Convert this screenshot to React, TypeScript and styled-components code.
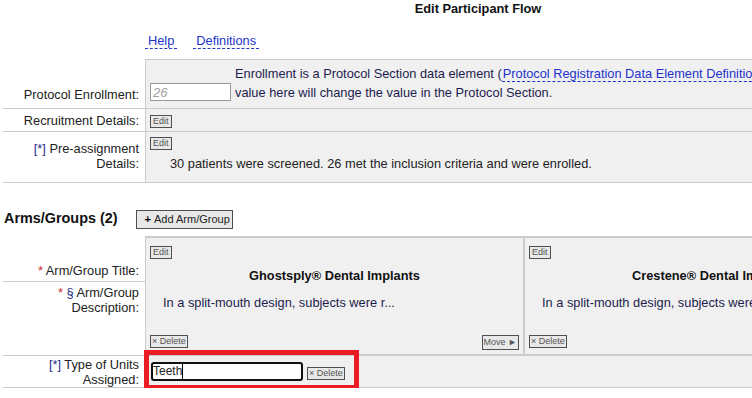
import styled, { createGlobalStyle } from "styled-components";

const GlobalStyle = createGlobalStyle`
  html, body {
    margin: 0;
    padding: 0;
    overflow: hidden;
    background: #ffffff;
  }
  body {
    font-family: "Liberation Sans", Arial, sans-serif;
    font-size: 12.8px;
    color: #222;
  }
`;

const Page = styled.div`
  width: 1000px;
  padding-left: 3px;
`;

const Title = styled.h1`
  width: 950px;
  margin: 0;
  padding-top: 1px;
  text-align: center;
  font-size: 12.8px;
  line-height: 15px;
  font-weight: bold;
  color: #111;
`;

const LinkBar = styled.div`
  display: flex;
  gap: 16px;
  padding: 17px 0 10px 142px;
`;

const DashLink = styled.a`
  display: inline-block;
  padding: 0 3px;
  line-height: 15px;
  color: #2233cc;
  text-decoration: none;
  border-bottom: 1px dashed #2233cc;
  cursor: pointer;
`;

const InlineLink = styled.a`
  color: #2233cc;
  text-decoration: none;
  border-bottom: 1px dashed #2233cc;
  padding: 0 1px;
`;

const FormGrid = styled.div`
  display: grid;
  grid-template-columns: 142px 1fr;
`;

const Label = styled.div<{ $align?: "start" | "center" | "end"; $pad?: string }>`
  display: flex;
  justify-content: flex-end;
  align-items: ${({ $align }) =>
    $align === "start" ? "flex-start" : $align === "end" ? "flex-end" : "center"};
  padding: ${({ $pad }) => $pad ?? "0"};
  padding-right: 6px;
  text-align: right;
  line-height: 15px;
  color: #222;
  border-bottom: 1px solid #cbcbcb;
  box-sizing: border-box;
`;

const Marker = styled.span<{ $color: string }>`
  color: ${({ $color }) => $color};
`;

const Value = styled.div<{ $top?: boolean; $pad: string; $dir?: "row" | "column" }>`
  position: relative;
  display: flex;
  flex-direction: ${({ $dir }) => $dir ?? "row"};
  align-items: ${({ $dir }) => ($dir === "column" ? "flex-start" : "center")};
  padding: ${({ $pad }) => $pad};
  background: #f0f0f0;
  border-left: 1px solid #cbcbcb;
  border-bottom: 1px solid #cbcbcb;
  border-top: ${({ $top }) => ($top ? "1px solid #cbcbcb" : "none")};
  box-sizing: border-box;
`;

const EnrollValue = styled(Value)`
  align-items: flex-end;
`;

const NumberInput = styled.input`
  box-sizing: border-box;
  width: 81px;
  height: 18px;
  margin: 0 4px 1px 0;
  padding: 0 2px;
  border: 1px solid #9a9a9a;
  background: #fff;
  font-family: "Liberation Sans", Arial, sans-serif;
  font-size: 13px;
  &::placeholder {
    color: #a0a0a0;
    font-style: italic;
  }
`;

const Note = styled.div`
  white-space: nowrap;
  line-height: 19px;
  color: #1d1d4d;
`;

const SmallButton = styled.button<{ $pad?: string; $h?: number }>`
  box-sizing: border-box;
  height: ${({ $h }) => $h ?? 13}px;
  padding: ${({ $pad }) => $pad ?? "0 2px"};
  border: 1px solid #4f4f4f;
  border-radius: 0;
  background: #e8e8e8;
  color: #555;
  font-family: "Liberation Sans", Arial, sans-serif;
  font-size: 9px;
  line-height: 11px;
  white-space: nowrap;
  cursor: pointer;
`;

const Paragraph = styled.p`
  margin: 6px 0 0 20px;
  line-height: 15px;
  color: #222;
`;

const SectionHead = styled.div`
  display: flex;
  align-items: center;
  gap: 18px;
  margin-top: 27px;
  padding-left: 1px;
`;

const SectionTitle = styled.h2`
  margin: -2px 0 0;
  font-size: 14.4px;
  line-height: 17px;
  font-weight: bold;
  color: #111;
`;

const AddButton = styled.button`
  box-sizing: border-box;
  height: 19px;
  padding: 0 2px 0 8px;
  border: 1px solid #4f4f4f;
  border-radius: 0;
  background: #e8e8e8;
  color: #222;
  font-family: "Liberation Sans", Arial, sans-serif;
  font-size: 11px;
  line-height: 15px;
  cursor: pointer;

  b {
    color: #000;
    margin-right: 3px;
  }
`;

const ArmsSection = styled.div`
  display: flex;
  margin-top: 7px;
  height: 120px;
`;

const ArmsLabels = styled.div`
  display: flex;
  flex-direction: column;
  width: 142px;
  flex-shrink: 0;
`;

const ArmsBox = styled.div`
  display: flex;
  box-sizing: border-box;
  background: #f0f0f0;
  border-top: 2px solid #cbcbcb;
  border-bottom: 2px solid #cbcbcb;
  border-left: 1px solid #cbcbcb;
`;

const ArmCell = styled.div`
  display: flex;
  flex-direction: column;
  width: 379px;
  flex-shrink: 0;
  box-sizing: border-box;
  padding: 5px 4px 4px;
  border-right: 2px solid #cbcbcb;
`;

const ArmTitle = styled.div`
  margin-top: 9px;
  text-align: center;
  font-weight: bold;
  line-height: 15px;
  color: #111;
`;

const ArmDesc = styled.div`
  margin-top: 12px;
  padding-left: 13px;
  line-height: 15px;
  color: #1d1d4d;
  white-space: nowrap;
`;

const ArmFooter = styled.div`
  display: flex;
  justify-content: space-between;
  align-items: flex-start;
  height: 15px;
  margin-top: auto;
`;

const TextBox = styled.div`
  box-sizing: border-box;
  display: flex;
  align-items: center;
  width: 152px;
  height: 19px;
  padding: 0;
  border: 2px solid #111;
  border-radius: 3px;
  background: #fff;
  font-size: 12px;
  line-height: 15px;
  color: #222;
`;

const Caret = styled.span`
  display: inline-block;
  width: 1px;
  height: 15px;
  background: #000;
`;

const UnitDelete = styled(SmallButton)`
  margin: 4px 0 0 4px;
`;

const Highlight = styled.div`
  position: absolute;
  left: -2px;
  top: -6px;
  width: 215px;
  height: 40px;
  box-sizing: border-box;
  border: 5px solid #ec1c24;
  pointer-events: none;
`;

const arms = [
  { title: "Ghostsply® Dental Implants", canMove: true },
  { title: "Crestene® Dental Implants", canMove: false },
];

export default function App() {
  return (
    <>
      <GlobalStyle />
      <Page>
        <Title>Edit Participant Flow</Title>
        <LinkBar>
          <DashLink>Help</DashLink>
          <DashLink>Definitions</DashLink>
        </LinkBar>

        <FormGrid>
          <Label $align="end" $pad="0 0 6px">
            Protocol Enrollment:
          </Label>
          <EnrollValue $top $pad="4px 0 6px 4px">
            <NumberInput placeholder="26" />
            <Note>
              Enrollment is a Protocol Section data element (
              <InlineLink>Protocol Registration Data Element Definitions</InlineLink>
              ). Changing the
              <br />
              value here will change the value in the Protocol Section.
            </Note>
          </EnrollValue>

          <Label>Recruitment Details:</Label>
          <Value $pad="6px 0 3px 4px">
            <SmallButton>Edit</SmallButton>
          </Value>

          <Label $align="end" $pad="0 0 11px">
            <span>
              <Marker $color="#1f2d8c">[*]</Marker> Pre-assignment
              <br />
              Details:
            </span>
          </Label>
          <Value $dir="column" $pad="5px 0 11px 4px">
            <SmallButton>Edit</SmallButton>
            <Paragraph>
              30 patients were screened. 26 met the inclusion criteria and were
              enrolled.
            </Paragraph>
          </Value>
        </FormGrid>

        <SectionHead>
          <SectionTitle>Arms/Groups (2)</SectionTitle>
          <AddButton>
            <b>+</b>Add Arm/Group
          </AddButton>
        </SectionHead>

        <ArmsSection>
          <ArmsLabels>
            <Label $align="end" $pad="0 0 3px" style={{ height: 46 }}>
              <span>
                <Marker $color="#cc2b2b">*</Marker> Arm/Group Title:
              </span>
            </Label>
            <Label $align="start" $pad="3px 0 0" style={{ flex: 1 }}>
              <span>
                <Marker $color="#cc2b2b">*</Marker>{" "}
                <Marker $color="#1f2d8c">§</Marker> Arm/Group
                <br />
                Description:
              </span>
            </Label>
          </ArmsLabels>
          <ArmsBox>
            {arms.map((arm) => (
              <ArmCell key={arm.title}>
                <div>
                  <SmallButton>Edit</SmallButton>
                </div>
                <ArmTitle>{arm.title}</ArmTitle>
                <ArmDesc>In a split-mouth design, subjects were r...</ArmDesc>
                <ArmFooter>
                  <SmallButton $pad="0 1px">× Delete</SmallButton>
                  {arm.canMove ? (
                    <SmallButton $pad="0 1px" $h={15}>
                      Move ►
                    </SmallButton>
                  ) : null}
                </ArmFooter>
              </ArmCell>
            ))}
          </ArmsBox>
        </ArmsSection>

        <FormGrid>
          <Label>
            <span>
              <Marker $color="#1f2d8c">[*]</Marker> Type of Units
              <br />
              Assigned:
            </span>
          </Label>
          <Value $pad="0 0 0 5px" style={{ height: 32 }}>
            <TextBox>
              Teeth
              <Caret />
            </TextBox>
            <UnitDelete $pad="0 1px">× Delete</UnitDelete>
            <Highlight />
          </Value>
        </FormGrid>
      </Page>
    </>
  );
}
